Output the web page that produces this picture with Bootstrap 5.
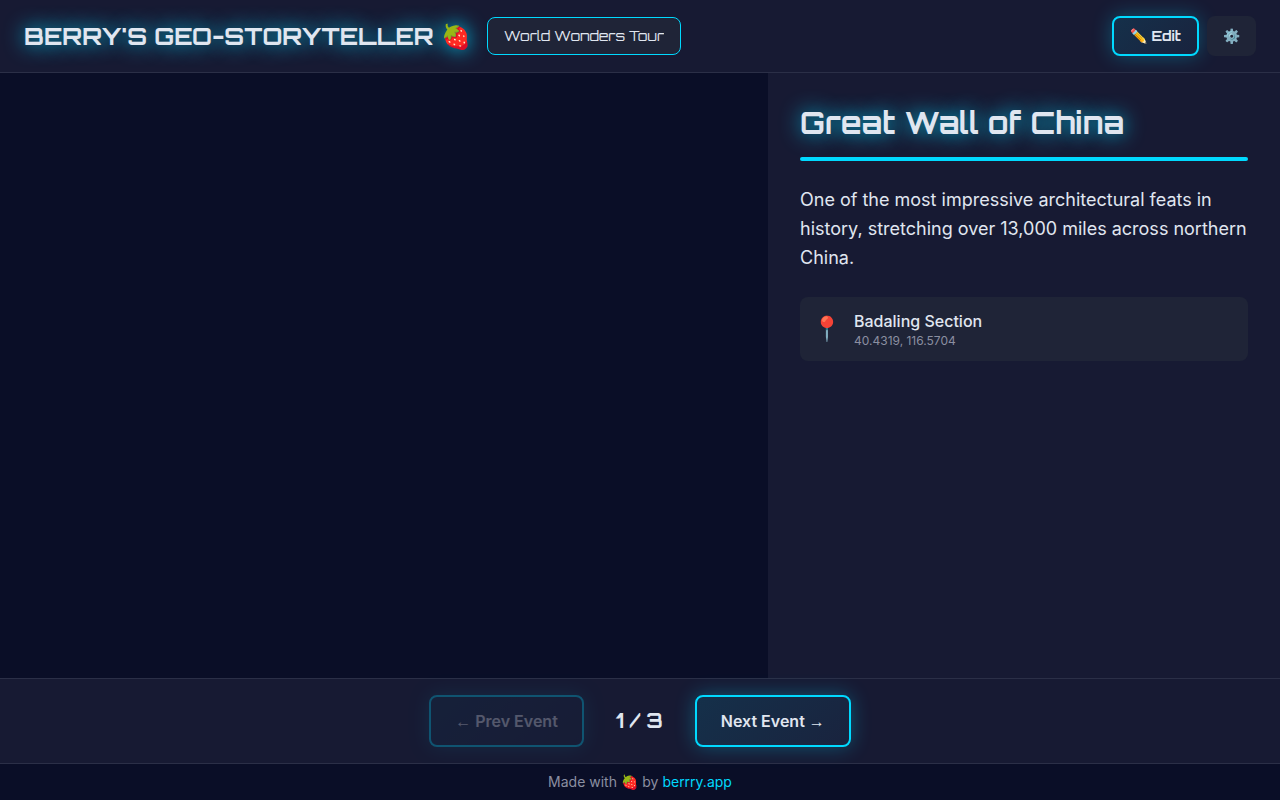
<!DOCTYPE html>
<html lang="en">
<head>
<meta charset="utf-8">
<meta name="viewport" content="width=device-width, initial-scale=1">
<title>Berry's Geo-Storyteller</title>
<link href="https://cdn.jsdelivr.net/npm/bootstrap@5.3.0/dist/css/bootstrap.min.css" rel="stylesheet">
<style>
  :root {
    --ink: #e0e6f0;
    --dim: #8b8fa1;
    --neon: #00d9ff;
    --panel: #171a33;
    --night: #0a0e27;
    --tile: #1f2437;
    --rule: #2b2f47;
    --display: Orbitron, "DejaVu Sans", sans-serif;
  }
  body { font-family: Inter, "Noto Color Emoji", sans-serif; background: var(--night); color: var(--ink); }
  .panel { background: var(--panel); }
  .rule-bottom { border-bottom: 1px solid var(--rule); }
  .rule-top { border-top: 1px solid var(--rule); }
  .display-face { font-family: var(--display); }
  .glow { text-shadow: 0 0 20px rgba(0, 217, 255, .9); }
  .brand { font-size: 24px; line-height: 32px; font-weight: 700; }
  .story-select {
    font-family: var(--display); font-size: 14px; line-height: 20px; width: 194px; height: 38px;
    padding: 8px 16px; color: var(--ink); background: var(--tile);
    border: 1px solid var(--neon); border-radius: 8px; appearance: none;
  }
  .btn { --bs-btn-color: var(--ink); --bs-btn-hover-color: #fff; border-radius: 8px; }
  .btn-neon {
    border: 2px solid var(--neon); font-weight: 600;
    background: linear-gradient(135deg, #15304a, #19233e);
    box-shadow: 0 0 20px rgba(0, 217, 255, .3);
  }
  .btn-neon:disabled { opacity: .3; color: var(--ink); border-color: var(--neon); }
  .btn-head { font-family: var(--display); font-size: 14px; font-weight: 700; line-height: 20px; height: 40px; padding: 0 16px; }
  .btn-gear { background: var(--tile); padding: 0 15px; }
  .btn-step { font-size: 16px; line-height: 24px; height: 52px; padding: 0 24px; }
  .arrow { font-family: "Liberation Sans", sans-serif; line-height: 1; }
  .story { flex: 0 0 40%; padding: 32px; }
  .story-title { font-size: 30px; line-height: 36px; font-weight: 700; }
  .underline-bar { height: 4px; border-radius: 2px; background: var(--neon); margin-top: 16px; }
  .story-text { font-size: 18px; line-height: 29px; margin: 24px 0 25px; }
  .place { background: var(--tile); border-radius: 8px; height: 64px; padding: 0 16px; }
  .pin { font-size: 24px; line-height: 32px; width: 22px; }
  .place-name { font-size: 16px; line-height: 24px; font-weight: 500; }
  .coords { font-size: 12px; line-height: 16px; color: var(--dim); }
  .counter { font-size: 20px; line-height: 28px; font-weight: 700; }
  .credit { font-size: 14px; line-height: 20px; color: var(--dim); padding: 8px 0; }
  .credit a { color: var(--neon); text-decoration: none; }
</style>
</head>
<body class="vh-100 d-flex flex-column overflow-hidden">
  <header class="panel rule-bottom d-flex align-items-center justify-content-between px-4 py-3">
    <div class="d-flex align-items-center gap-3">
      <h1 class="brand display-face glow mb-0 text-nowrap">BERRY'S GEO-STORYTELLER 🍓</h1>
      <select class="story-select" aria-label="Story">
        <option>World Wonders Tour</option>
      </select>
    </div>
    <div class="d-flex gap-2">
      <button type="button" class="btn btn-neon btn-head">✏️ Edit</button>
      <button type="button" class="btn btn-head btn-gear" aria-label="Settings">⚙️</button>
    </div>
  </header>
  <main class="d-flex flex-grow-1">
    <section class="flex-grow-1" aria-label="Map"></section>
    <aside class="story panel">
      <h2 class="story-title display-face glow mb-0 text-nowrap">Great Wall of China</h2>
      <div class="underline-bar"></div>
      <p class="story-text">One of the most impressive architectural feats in history, stretching over 13,000 miles across northern China.</p>
      <div class="place d-flex align-items-center gap-3">
        <span class="pin d-flex justify-content-center">📍</span>
        <div>
          <div class="place-name">Badaling Section</div>
          <div class="coords">40.4319, 116.5704</div>
        </div>
      </div>
    </aside>
  </main>
  <nav class="panel rule-top d-flex align-items-center justify-content-center py-3" aria-label="Events">
    <button type="button" class="btn btn-neon btn-step" disabled><span class="arrow">←</span> Prev Event</button>
    <span class="counter display-face mx-4 px-2 text-nowrap">1 / 3</span>
    <button type="button" class="btn btn-neon btn-step">Next Event <span class="arrow">→</span></button>
  </nav>
  <footer class="credit rule-top text-center">Made with 🍓 by <a href="#">berrry.app</a></footer>
<script src="https://cdn.jsdelivr.net/npm/bootstrap@5.3.0/dist/js/bootstrap.bundle.min.js"></script>
</body>
</html>
